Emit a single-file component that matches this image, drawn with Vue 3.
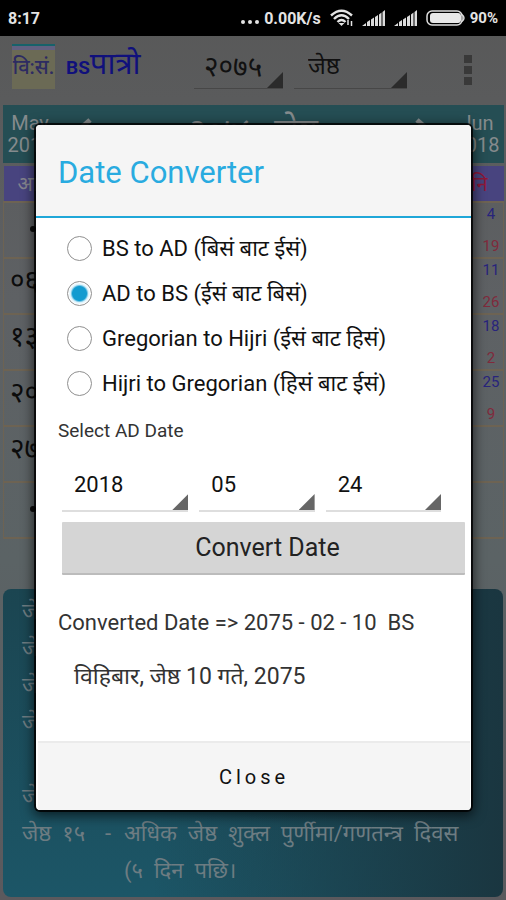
<script setup>
import { ref } from 'vue'

const modes = [
  { id: 'bs-ad', label: 'BS to AD (बिसं बाट ईसं)' },
  { id: 'ad-bs', label: 'AD to BS (ईसं बाट बिसं)' },
  { id: 'greg-hijri', label: 'Gregorian to Hijri (ईसं बाट हिसं)' },
  { id: 'hijri-greg', label: 'Hijri to Gregorian (हिसं बाट ईसं)' },
]
const mode = ref('ad-bs')

const dateFields = [
  { id: 'year', label: 'Year', value: '2018' },
  { id: 'month', label: 'Month', value: '05' },
  { id: 'day', label: 'Day', value: '24' },
]

const weeks = [
  { first: '', dot: true, top: '4', bottom: '19' },
  { first: '०६', top: '11', bottom: '26' },
  { first: '१३', top: '18', bottom: '2' },
  { first: '२०', top: '25', bottom: '9' },
  { first: '२७', top: '', bottom: '' },
  { first: '', dot: true, top: '', bottom: '' },
]

const events = [
  { date: 'जेष्ठ', text: '' },
  { date: 'जेष्ठ', text: '' },
  { date: 'जेष्ठ', text: '' },
  { date: 'जेष्ठ', text: '' },
  { date: '', text: '' },
  { date: 'जेष्ठ', text: '' },
  { date: 'जेष्ठ  १५', text: 'अधिक  जेष्ठ  शुक्ल  पुर्णीमा/गणतन्त्र  दिवस' },
  { date: '', text: '(५  दिन  पछि।' },
]
</script>

<template>
  <div class="screen">
    <div class="status">
      <span>8:17</span>
      <div class="status-right">
        <span class="dots"><i></i><i></i><i></i></span>
        <span class="speed">0.00K/s</span>
        <svg class="wifi" width="24" height="18" viewBox="0 0 24 18" fill="none" stroke="#e4e4e4" stroke-width="2">
          <path d="M1 6.500Q11.500-3 22 6.500M4 10Q11.500 2.500 19 10M7.500 13Q11.500 9 15.500 13" stroke-width="2.400" />
          <path d="M8.500 14h6L11.500 17z" fill="#e4e4e4" stroke="none" />
          <path d="M18 11v5M21.500 12v5" stroke-width="1.500" />
        </svg>
        <svg v-for="n in 2" :key="n" class="signal" width="24" height="17" viewBox="0 0 24 17" fill="#dcdcdc">
          <path d="M0 16l4-3v3zM5 12l3-2v6H5zM9 9.500l3-2V16H9zM13 7l3-2v11h-3zM17 4.500l2.500-2V16H17zM20.500 2L23 0v16h-2.500z" />
        </svg>
        <svg class="battery" width="40" height="16" viewBox="0 0 40 16">
          <rect x="1" y="1" width="35" height="14" rx="5" fill="none" stroke="#ddd" stroke-width="1.500" />
          <rect x="4" y="3" width="31" height="10" rx="3" fill="#e8e8e8" />
          <path d="M36 4.500q4 3.500 0 7" fill="none" stroke="#ddd" stroke-width="1.500" />
        </svg>
        <span class="percent">90%</span>
      </div>
    </div>

    <header class="toolbar">
      <div class="logo"><span>वि:सं.</span></div>
      <h1 class="brand"><span class="brand-bs">BS</span><span class="brand-np">पात्रो</span></h1>
      <div class="picker year">
        <select aria-label="वर्ष"><option>२०७५</option></select>
      </div>
      <div class="picker month">
        <select aria-label="महिना"><option>जेष्ठ</option></select>
      </div>
      <button class="more" type="button" aria-label="Menu"><i></i><i></i><i></i></button>
    </header>

    <main class="calendar">
      <div class="month-bar">
        <div class="ad-month">May<br />2018</div>
        <svg class="arrow" width="16" height="20" viewBox="0 0 16 20"><path d="M13 2L4 10l9 8" fill="none" stroke="#858b8d" stroke-width="5" /></svg>
        <div class="bs-month">२०७५ &nbsp;जेष्ठ</div>
        <svg class="arrow" width="16" height="20" viewBox="0 0 16 20"><path d="M3 2l9 8-9 8" fill="none" stroke="#858b8d" stroke-width="5" /></svg>
        <div class="ad-month">Jun<br />2018</div>
      </div>
      <table class="grid">
        <thead>
          <tr>
            <th>आइत</th><th></th><th></th><th></th><th></th><th></th><th class="sat">शनि</th>
          </tr>
        </thead>
        <tbody>
          <tr v-for="(w, i) in weeks" :key="i">
            <td class="sun"><span v-if="w.dot" class="bullet"></span>{{ w.first }}</td>
            <td v-for="n in 5" :key="n"></td>
            <td>
              <div class="pair"><span>{{ w.top }}</span><span class="red">{{ w.bottom }}</span></div>
            </td>
          </tr>
        </tbody>
      </table>
    </main>

    <section class="events">
      <div v-for="(e, i) in events" :key="i" class="event">
        <span class="event-date">{{ e.date }}</span>
        <span class="event-dash">{{ e.date && e.text ? '-' : '' }}</span>
        <span>{{ e.text }}</span>
      </div>
    </section>

    <div class="overlay">
      <form class="dialog" role="dialog" aria-labelledby="dialog-title" @submit.prevent>
        <h2 id="dialog-title" class="title">Date Converter</h2>
        <div class="body">
          <div class="modes">
            <label v-for="m in modes" :key="m.id" class="mode">
              <input v-model="mode" type="radio" name="mode" :value="m.id" />
              <span>{{ m.label }}</span>
            </label>
          </div>
          <p class="hint">Select AD Date</p>
          <div class="fields">
            <div v-for="f in dateFields" :key="f.id" class="field">
              <select :aria-label="f.label"><option>{{ f.value }}</option></select>
            </div>
          </div>
          <button class="convert" type="submit">Convert Date</button>
          <p class="result">Converted Date =&gt; 2075 - 02 - 10 &nbsp;BS</p>
          <p class="result-np">विहिबार, जेष्ठ 10 गते, 2075</p>
        </div>
        <div class="footer"><button class="close" type="button">Close</button></div>
      </form>
    </div>
  </div>
</template>

<style>
body {
  background: #5b5c5e;
}
</style>

<style scoped>
* {
  box-sizing: border-box;
}
.screen {
  position: relative;
  min-height: 100vh;
  overflow: hidden;
  background: linear-gradient(#585858 0, #5e6164 300px, #5b6365 560px, #5b595d 900px);
  font-family: Roboto, "Noto Sans", sans-serif;
  color: #111;
}
h1, h2, p {
  margin: 0;
  font-weight: 400;
}
button, select {
  font: inherit;
  color: inherit;
  border: 0;
  background: none;
  padding: 0;
}

/* status bar */
.status {
  display: flex;
  justify-content: space-between;
  align-items: center;
  height: 36px;
  padding: 0 8px;
  background: #000;
  color: #e4e4e4;
  font-size: 16px;
  font-weight: 700;
}
.status-right {
  display: flex;
  align-items: center;
}
.dots {
  display: flex;
  gap: 3px;
  margin: 8px 5px 0 0;
}
.dots i {
  width: 4px;
  height: 4px;
  border-radius: 2px;
  background: #e4e4e4;
}
.speed {
  margin-right: 9px;
}
.wifi, .signal {
  margin-right: 8px;
}
.battery {
  margin-right: 4px;
}
.percent {
  font-size: 15px;
}

/* toolbar */
.toolbar {
  display: flex;
  height: 67px;
  padding: 8px 30px 0 12px;
}
.logo {
  display: flex;
  align-items: center;
  justify-content: center;
  width: 43px;
  height: 45px;
  background: linear-gradient(#17626a 0 2px, #626080 2px 6px, #6b6a55 6px);
  color: #2d2b62;
  font-size: 20px;
  font-weight: 500;
  white-space: nowrap;
}
.brand {
  display: flex;
  align-items: baseline;
  margin-left: 11px;
  width: 118px;
  height: 40px;
  line-height: 40px;
  color: #10107c;
}
.brand-bs {
  font-size: 19px;
  font-weight: 700;
}
.brand-np {
  font-size: 31px;
}
.picker {
  position: relative;
  height: 45px;
  border-bottom: 1px solid #474747;
}
.picker::after, .field::after {
  content: "";
  position: absolute;
  right: 0;
  bottom: 0;
  width: 16px;
  height: 16px;
  background: #2b2b2b;
  clip-path: polygon(100% 0, 100% 100%, 0 100%);
  pointer-events: none;
}
.picker select {
  appearance: none;
  width: 100%;
  height: 44px;
  font-size: 24px;
}
.year {
  width: 89px;
  margin-left: 10px;
}
.year select {
  padding-left: 10px;
  font-size: 28px;
}
.month {
  width: 113px;
  margin-left: 11px;
}
.month select {
  padding-left: 14px;
}
.more {
  display: flex;
  flex-direction: column;
  gap: 3px;
  margin: 11px 4px 0 auto;
  height: 30px;
}
.more i {
  width: 8px;
  height: 8px;
  background: #393939;
}

/* calendar */
.calendar {
  padding: 2px 2px 0 3px;
}
.month-bar {
  display: flex;
  align-items: flex-start;
  height: 58px;
  padding: 7px 4px 0;
  background: #254e54;
  color: #858b8d;
  font-size: 20px;
  line-height: 22px;
  text-align: center;
}
.ad-month {
  width: 46px;
}
.arrow {
  margin: 6px 24px 0;
}
.bs-month {
  flex: 1;
  font-size: 33px;
  line-height: 38px;
  white-space: nowrap;
}
.grid {
  width: 100%;
  margin-top: 3px;
  border-collapse: collapse;
  table-layout: fixed;
}
.grid th {
  height: 36px;
  padding: 0 14px;
  background: #48447f;
  color: #85858e;
  font-size: 20px;
  font-weight: 400;
  text-align: left;
}
.grid th.sat {
  padding: 0 16px;
  color: #8d1738;
  text-align: right;
}
.grid td {
  height: 56px;
  padding: 0 2px 0 6px;
  border-top: 2px solid #6d6353;
  border-bottom: 2px solid #6d6353;
}
.grid td:first-child {
  border-left: 1px solid #6d6353;
}
.grid td:last-child {
  border-right: 1px solid #6d6353;
}
.grid .sun {
  padding-top: 1px;
  font-size: 28px;
  line-height: 42px;
  vertical-align: top;
  color: #0c0c0c;
  white-space: nowrap;
}
.bullet {
  display: block;
  width: 6px;
  height: 6px;
  margin: 22px 0 0 20px;
  border-radius: 3px;
  background: #0c0c0c;
}
.pair {
  display: flex;
  flex-direction: column;
  justify-content: space-between;
  align-items: center;
  width: 20px;
  height: 52px;
  margin-left: auto;
  color: #28247c;
  font-size: 15px;
  line-height: 20px;
}
.red {
  color: #802a3c;
}

/* events */
.events {
  margin: 50px 3px 4px;
  padding: 4px 20px 8px 19px;
  border-radius: 8px;
  background:
    linear-gradient(to right, rgba(26, 48, 56, 0) 30%, #1a3640),
    linear-gradient(#1b4551, #1c5667);
  color: #6d7c82;
  font-size: 22px;
}
.event {
  display: flex;
  height: 37px;
  line-height: 37px;
  white-space: pre;
}
.event-date {
  width: 83px;
}
.event-dash {
  width: 19px;
}

/* dialog */
.overlay {
  position: absolute;
  inset: 0;
  padding: 125px 35px 0 36px;
}
.dialog {
  overflow: hidden;
  border-radius: 4px;
  background: #fff;
  box-shadow: 0 0 0 2px rgba(0, 0, 0, 0.8), 0 3px 12px 3px rgba(0, 0, 0, 0.6);
}
.title {
  height: 93px;
  padding-left: 22px;
  border-bottom: 2px solid #1fa7d8;
  background: #f5f5f5;
  color: #29abe0;
  font-size: 31px;
  line-height: 95px;
}
.body {
  height: 523px;
  padding: 8px 6px 0 22px;
}
.mode {
  display: flex;
  align-items: center;
  gap: 10px;
  height: 45px;
  padding-left: 9px;
  font-size: 22px;
  line-height: 45px;
  white-space: nowrap;
}
.mode input {
  appearance: none;
  width: 25px;
  height: 25px;
  margin: 0;
  border: 1px solid #8f8f8f;
  border-radius: 50%;
  background: #fff;
}
.mode input:checked {
  background: radial-gradient(circle, #129bd0 0 7px, #d9f1fb 9px, #fff 11px);
}
.hint {
  height: 50px;
  line-height: 50px;
  font-size: 19px;
  color: #333;
}
.fields {
  display: grid;
  grid-template-columns: 127fr 116fr 116fr;
  gap: 11px;
  padding: 0 24px 0 4px;
}
.field {
  position: relative;
  height: 56px;
  border-bottom: 2px solid #dedede;
}
.field::after {
  background: #666;
}
.field select {
  appearance: none;
  width: 100%;
  height: 56px;
  padding-left: 12px;
  font-size: 22px;
}
.convert {
  display: block;
  width: calc(100% - 4px);
  height: 53px;
  margin: 10px 0 0 4px;
  padding-left: 8px;
  border-bottom: 2px solid #bcbcbc;
  border-radius: 1px;
  background: #d5d5d5;
  font-size: 25px;
  color: #222;
}
.result {
  margin-top: 22px;
  height: 52px;
  line-height: 52px;
  font-size: 22px;
  color: #333;
}
.result-np {
  padding-left: 16px;
  height: 56px;
  line-height: 56px;
  font-size: 23px;
  color: #333;
}
.footer {
  margin: 0 1px 0 2px;
  border-top: 2px solid #ebebeb;
  background: #f5f5f5;
}
.close {
  display: block;
  width: 100%;
  height: 67px;
  font-size: 20px;
  letter-spacing: 4px;
}
</style>
